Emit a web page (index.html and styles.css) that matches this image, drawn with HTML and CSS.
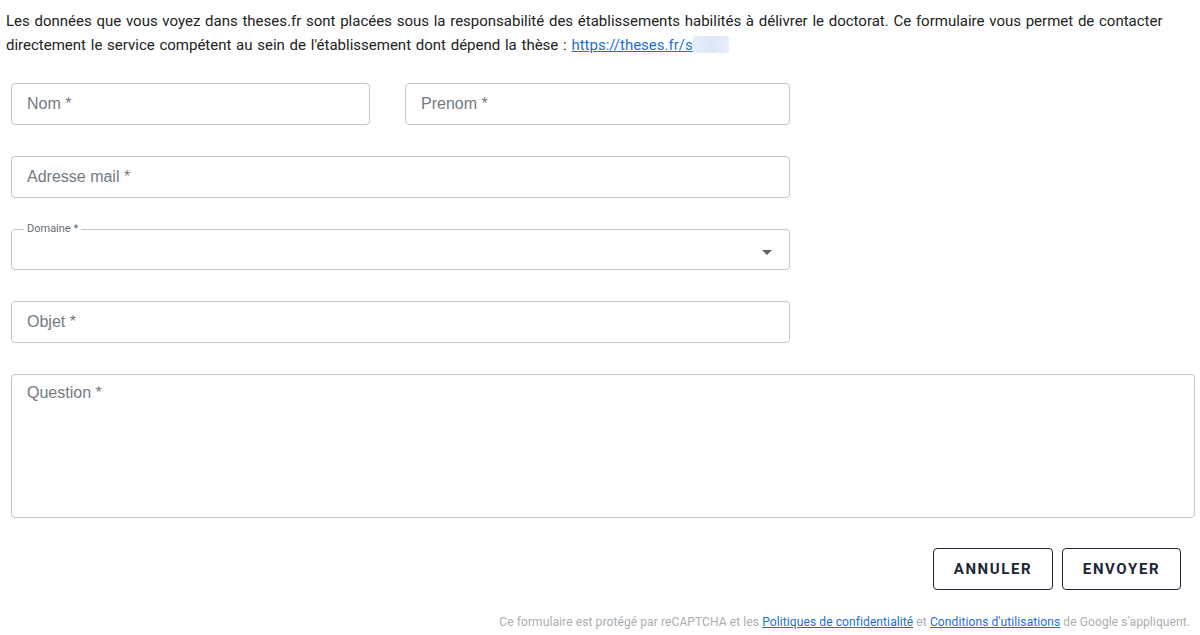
FILE: index.html
```html
<!DOCTYPE html>
<html lang="fr">
<head>
<meta charset="utf-8">
<link rel="stylesheet" href="styles.css">
</head>
<body>
<div class="page">
  <p class="intro">Les données que vous voyez dans theses.fr sont placées sous la responsabilité des établissements habilités à délivrer le doctorat. Ce formulaire vous permet de contacter directement le service compétent au sein de l'établissement dont dépend la thèse : <a href="#">https://theses.fr/s</a></p>
  <form class="form">
    <div class="row">
      <div class="field f-nom"><input placeholder="Nom *"></div>
      <div class="field f-prenom"><input placeholder="Prenom *"></div>
    </div>
    <div class="row">
      <div class="field f-wide"><input placeholder="Adresse mail *"></div>
    </div>
    <div class="row">
      <fieldset class="field f-wide select">
        <legend>Domaine *</legend>
        <span class="caret"></span>
      </fieldset>
    </div>
    <div class="row">
      <div class="field f-wide"><input placeholder="Objet *"></div>
    </div>
    <div class="row">
      <div class="field f-full"><textarea placeholder="Question *"></textarea></div>
    </div>
    <div class="actions">
      <button type="button" class="btn">ANNULER</button>
      <button type="button" class="btn">ENVOYER</button>
    </div>
    <p class="legal">Ce formulaire est protégé par reCAPTCHA et les <a href="#">Politiques de confidentialité</a> et <a href="#">Conditions d'utilisations</a> de Google s'appliquent.</p>
  </form>
</div>
</body>
</html>
```

FILE: styles.css
```css
* { box-sizing: border-box; }
html, body { margin: 0; padding: 0; background: #fff; }
body { font-family: Roboto, "Liberation Sans", sans-serif; color: #1f1f1f; }
.page { padding: 0 5px 0 6px; }
.intro {
  margin: 0;
  padding-top: 9px;
  font-size: 15px;
  line-height: 24px;
  word-spacing: 1px;
  color: #222;
}
.intro a { color: #1a6fd6; text-decoration: underline; word-spacing: 0; }
.intro::after {
  content: "";
  display: inline-block;
  width: 36px;
  height: 17px;
  vertical-align: -3px;
  background: linear-gradient(90deg, #e6eef9, #dce6f6, #e8eff9);
  border-radius: 2px;
}
.form { padding: 0 0 0 5px; margin-top: 26px; }
.row { display: flex; gap: 35px; margin-bottom: 31px; }
.field {
  height: 42px;
  border: 1px solid #c2c6cb;
  border-radius: 4px;
  background: #fff;
  margin: 0;
  padding: 0;
}
.field input, .field textarea {
  width: 100%;
  height: 100%;
  border: 0;
  outline: 0;
  background: transparent;
  padding: 0 15px;
  font-family: "Liberation Sans", Arial, sans-serif;
  font-size: 16px;
  color: #333;
}
.field input::placeholder, .field textarea::placeholder { color: #727a83; opacity: 1; }
.f-nom { width: 359px; }
.f-prenom { width: 385px; }
.f-wide { width: 779px; }
.f-full { width: 1184px; height: 144px; margin-bottom: -1px; }
.field textarea { resize: none; padding-top: 9px; line-height: 18px; }
.select {
  position: relative;
  padding: 0 10px;
  margin-top: -6px;
  height: 47px;
}
.select legend {
  font-size: 11px;
  color: #666c72;
  padding: 0 3px;
  margin-left: 2px;
  line-height: 12px;
}
.caret {
  position: absolute;
  right: 17px;
  top: 15px;
  width: 0; height: 0;
  border-left: 5px solid transparent;
  border-right: 5px solid transparent;
  border-top: 5px solid #5b626a;
}
.actions {
  display: flex;
  justify-content: flex-end;
  gap: 9px;
  margin-top: 2px;
  padding-right: 14px;
}
.btn {
  height: 42px;
  padding: 0;
  border: 1px solid #1c2736;
  border-radius: 4px;
  background: #fff;
  font-family: Roboto, sans-serif;
  font-weight: 700;
  font-size: 15px;
  letter-spacing: 1.6px;
  color: #1c2736;
}
.btn:first-child { width: 120px; }
.btn:last-child { width: 119px; }
.legal {
  margin: 25px 0 0;
  text-align: right;
  font-size: 12px;
  letter-spacing: 0.1px;
  color: #a9adb1;
  padding-right: 5px;
}
.legal a { color: #1a6fd6; }
```
